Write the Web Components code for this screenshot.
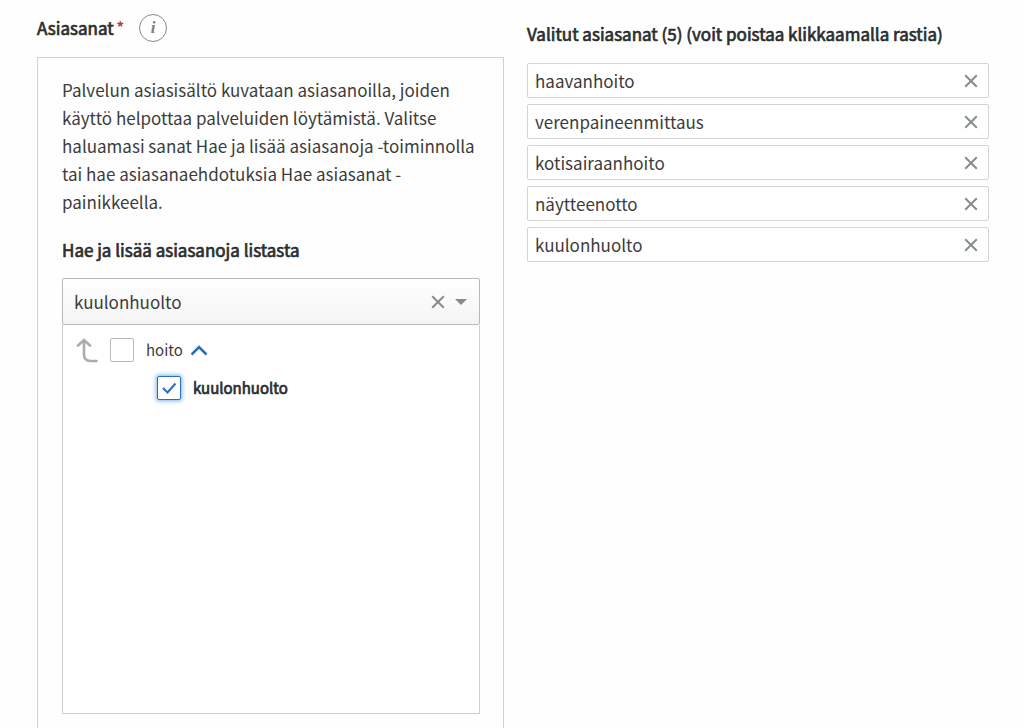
<!DOCTYPE html>
<html lang="fi">
<head>
<meta charset="utf-8">
<meta name="viewport" content="width=device-width, initial-scale=1">
<title>Asiasanat</title>
<style>
  body { margin: 0; background: #fefefe; color: #3c3c3c; font-family: "Noto Sans CJK SC", "Noto Sans", sans-serif; font-size: 17px; line-height: 28px; }
</style>
</head>
<body>
<keyword-page></keyword-page>
<script>
const define = (name, html, setup) => customElements.define(name, class extends HTMLElement {
  constructor() {
    super();
    const t = document.createElement('template');
    t.innerHTML = html;
    this.attachShadow({ mode: 'open' }).append(t.content.cloneNode(true));
  }
  connectedCallback() { if (setup) setup(this, this.shadowRoot); }
});

define('icon-cross', `
<style>:host{display:block;width:14px;height:14px}svg{display:block}</style>
<svg width="14" height="14" viewBox="0 0 14 14" fill="none" stroke="#868d90" stroke-width="2" aria-hidden="true"><path d="M1.2 1.2 12.8 12.8M12.8 1.2 1.2 12.8"/></svg>`);

define('section-title', `
<style>
  :host{display:block}
  h2{margin:0;font-size:17px;line-height:28px;font-weight:400;color:#2a2e30;-webkit-text-stroke:.7px #2a2e30}
</style>
<h2><slot></slot></h2>`);

define('info-button', `
<style>
  :host{display:block}
  button{display:grid;place-items:center;width:28px;height:28px;padding:0;border:1px solid #85898b;border-radius:50%;background:#fff;color:#7b8082;font:italic bold 17px/20px "Liberation Serif",serif}
</style>
<button type="button" aria-label="Lisätietoja">i</button>`);

define('field-header', `
<style>
  :host{display:flex;align-items:center;gap:15px;padding:14px 0 15px}
  .name{display:flex;gap:3px}
  .req{color:#c13832;font-weight:bold;font-size:15px;line-height:26px}
</style>
<div class="name"><section-title><slot></slot></section-title><span class="req">*</span></div>
<info-button></info-button>`);

define('keyword-chip', `
<style>
  :host{display:flex;align-items:center;justify-content:space-between;box-sizing:border-box;height:35px;padding:0 10px 0 7px;border:1px solid #d2d5d6;border-radius:2px;background:#fff}
  button{border:0;background:none;padding:0;display:block;cursor:pointer}
</style>
<span><slot></slot></span>
<button type="button" aria-label="Poista"><icon-cross></icon-cross></button>`,
(host, root) => { root.querySelector('button').onclick = () => host.remove(); });

define('selected-keywords', `
<style>
  :host{display:flex;flex-direction:column;padding-top:20px;gap:15px}
  .list{display:flex;flex-direction:column;gap:6px}
</style>
<section-title><slot name="title"></slot></section-title>
<div class="list"><slot></slot></div>`);

define('keyword-combobox', `
<style>
  :host{display:flex;align-items:center;box-sizing:border-box;height:47px;padding:0 12px 0 11px;border:1px solid #b4babd;border-radius:2px;background:linear-gradient(#fff,#f4f4f4)}
  input{flex:1;min-width:0;padding:0;border:0;outline:0;background:none;font:inherit;color:inherit}
  button{border:0;background:none;padding:0;display:block}
  .open{margin-left:10px}
  svg{display:block}
</style>
<input type="text" role="combobox" aria-expanded="true" aria-label="Hae ja lisää asiasanoja listasta" value="kuulonhuolto">
<button type="button" aria-label="Tyhjennä"><icon-cross></icon-cross></button>
<button type="button" class="open" aria-label="Avaa"><svg width="12" height="6" viewBox="0 0 12 6"><path d="M0 0h12L6 6z" fill="#858b8c"/></svg></button>`,
(host, root) => { root.querySelector('button').onclick = () => { root.querySelector('input').value = ''; }; });

define('tree-option', `
<style>
  :host{display:flex;align-items:center;gap:8px;height:38px;font-size:15px}
  :host([checked]) label{color:#2a2e30;-webkit-text-stroke:.7px #2a2e30}
  label{display:flex;align-items:center;gap:12px}
  .box{display:grid;width:24px;height:24px}
  .box>*{grid-area:1/1}
  input{appearance:none;box-sizing:border-box;width:24px;height:24px;margin:0;border:1px solid #b4babd;border-radius:2px;background:#fff}
  input:checked{border-color:#2a6ebb;box-shadow:0 0 4px 1px #7fb0e6}
  svg{visibility:hidden;pointer-events:none}
  input:checked+svg{visibility:visible}
</style>
<slot name="before"></slot>
<label><span class="box"><input type="checkbox"><svg width="24" height="24" viewBox="0 0 24 24" fill="none" stroke="#2a6ebb" stroke-width="2"><path d="M6 12 10.500 16.500 18.500 7.500"/></svg></span><span><slot></slot></span></label>
<slot name="after"></slot>`,
(host, root) => { root.querySelector('input').checked = host.hasAttribute('checked'); });

define('level-up', `
<style>:host{display:block;padding-right:3px}button{display:block;border:0;background:none;padding:0}svg{display:block}</style>
<button type="button" aria-label="Ylös"><svg width="24" height="26" viewBox="0 0 24 26" fill="none" stroke="#acacac" stroke-width="2.600" stroke-linecap="round"><path d="M3 8.500 9 3l6 5.500M9 3.500v14q0 6.500 6.500 6.500h6"/></svg></button>`);

define('chevron-up', `
<style>:host{display:block}button{display:block;border:0;background:none;padding:0}svg{display:block}</style>
<button type="button" aria-label="Sulje"><svg width="18" height="12" viewBox="0 0 18 12" fill="none" stroke="#2a6ebb" stroke-width="2.600"><path d="M.500 10.500 8 3l7.500 7.500"/></svg></button>`);

define('keyword-tree', `
<style>
  :host{display:block;box-sizing:border-box;min-height:389px;padding:6px 12px;border:1px solid #cfd0d1;border-top:0;background:#fff}
  .child{margin-left:82px}
</style>
<tree-option><level-up slot="before"></level-up>hoito<chevron-up slot="after"></chevron-up></tree-option>
<tree-option class="child" checked>kuulonhuolto</tree-option>`);

define('keyword-picker', `
<style>
  :host{display:block;padding:18px 23px 24px 24px;border:1px solid #d0d1d2}
  p{margin:0 0 20px}
  section-title{margin-bottom:14px}
</style>
<p><slot></slot></p>
<section-title>Hae ja lisää asiasanoja listasta</section-title>
<keyword-combobox></keyword-combobox>
<keyword-tree></keyword-tree>`);

define('keyword-page', `
<style>
  :host{display:grid;grid-template-columns:minmax(0,467fr) minmax(0,462fr);gap:23px;padding:0 35px 0 37px}
</style>
<section>
  <field-header>Asiasanat</field-header>
  <keyword-picker>Palvelun asiasisältö kuvataan asiasanoilla, joiden käyttö helpottaa palveluiden löytämistä. Valitse haluamasi sanat Hae ja lisää asiasanoja -toiminnolla tai hae asiasanaehdotuksia Hae asiasanat -painikkeella.</keyword-picker>
</section>
<selected-keywords>
  <span slot="title">Valitut asiasanat (5) (voit poistaa klikkaamalla rastia)</span>
  <keyword-chip>haavanhoito</keyword-chip>
  <keyword-chip>verenpaineenmittaus</keyword-chip>
  <keyword-chip>kotisairaanhoito</keyword-chip>
  <keyword-chip>näytteenotto</keyword-chip>
  <keyword-chip>kuulonhuolto</keyword-chip>
</selected-keywords>`);
</script>
</body>
</html>
